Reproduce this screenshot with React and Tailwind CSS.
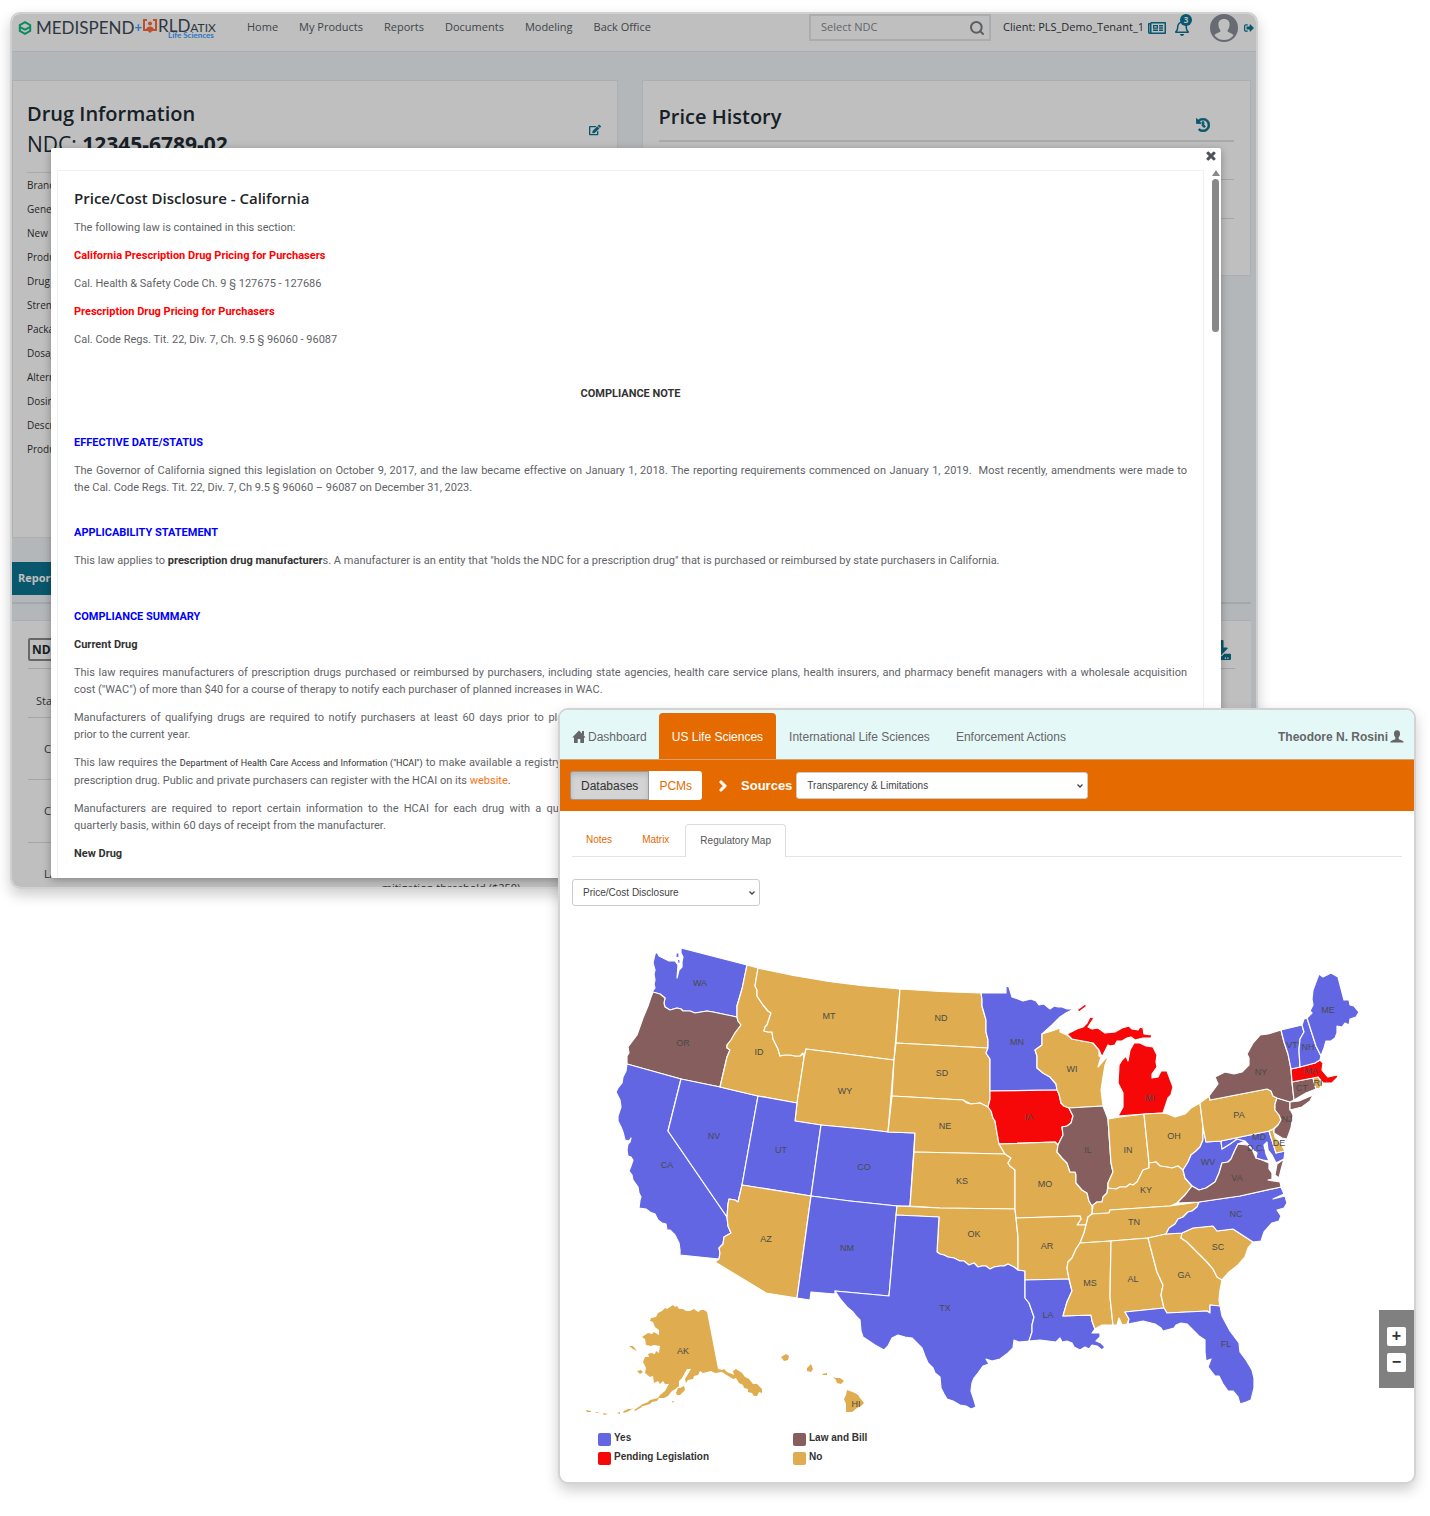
import { Search } from "lucide-react";
import {
  FaChevronRight,
  FaDownload,
  FaEdit,
  FaHistory,
  FaRegBell,
  FaRegNewspaper,
  FaSignOutAlt,
  FaTimes,
} from "react-icons/fa";

const NAV = ["Home", "My Products", "Reports", "Documents", "Modeling", "Back Office"];

const DRUG_FIELDS = [
  "Brand Name",
  "Generic Name",
  "New Drug",
  "Product Type",
  "Drug Class",
  "Strength",
  "Package Size",
  "Dosage Form",
  "Alternate ID",
  "Dosing Unit",
  "Description",
  "Product Status",
];

const COLORS = {
  yes: "#6266e3",
  pending: "#f70808",
  both: "#875e5e",
  no: "#dfad4f",
};

const LEGEND = [
  { label: "Yes", swatch: "bg-[#6266e3]" },
  { label: "Law and Bill", swatch: "bg-[#875e5e]" },
  { label: "Pending Legislation", swatch: "bg-[#f70808]" },
  { label: "No", swatch: "bg-[#dfad4f]" },
];

// [code, status, label x, label y, outline]
const STATES = [
  ["WA", "yes", 700, 983, "M681 948L747 965L742 989L737 1006L737 1017L713 1012L707 1011L695 1013L690 1011L683 1011L681 1009L677 1008L670 1010L665 1007L664 1003L665 998L660 994L652 992L655 988L654 984L655 980L654 974L655 970L653 963L655 954L657 952L659 956L663 958L669 961L675 961L678 965L677 978L679 970L682 967L682 962L683 957L681 953ZM676 953l3 0l0 4l-3 1ZM677 959l3 1l0 4l-2 -1Z"],
  ["OR", "both", 683, 1043, "M653 992L660 994L665 998L664 1003L665 1007L670 1010L677 1008L681 1009L683 1011L690 1011L695 1013L707 1011L713 1012L737 1017L738 1021L741 1025L735 1033L731 1040L727 1045L727 1048L730 1050L727 1057L720 1087L681 1079L627 1064L627 1056L629 1053L628 1047L637 1035L643 1018L648 1006L651 997Z"],
  ["CA", "yes", 667, 1165, "M627 1064L681 1079L668 1131L727 1217L728 1226L731 1233L724 1237L723 1244L719 1248L720 1253L719 1259L680 1255L680 1250L679 1243L675 1235L670 1230L667 1230L666 1224L662 1223L658 1220L655 1214L650 1212L646 1209L639 1208L640 1200L641 1197L639 1193L638 1187L633 1180L632 1175L629 1171L631 1166L633 1160L631 1157L628 1156L627 1150L628 1144L630 1142L631 1138L629 1141L625 1140L623 1132L621 1127L618 1121L618 1116L621 1107L620 1100L616 1092L618 1088L622 1083L623 1077L626 1071Z"],
  ["NV", "yes", 714, 1136, "M681 1079L720 1087L758 1096L742 1185L738 1202L735 1200L729 1199L728 1204L727 1217L668 1131Z"],
  ["ID", "no", 759, 1052, "M747 965L758 968L755 986L757 990L757 996L763 1005L768 1011L771 1013L769 1019L767 1025L765 1027L764 1031L768 1032L772 1032L773 1039L776 1045L778 1049L780 1056L784 1055L790 1055L795 1056L800 1056L803 1053L804 1058L797 1103L758 1096L720 1087L727 1057L730 1050L727 1048L727 1045L731 1040L735 1033L741 1025L738 1021L737 1017L737 1006L742 989Z"],
  ["MT", "no", 829, 1016, "M758 968Q826 984 900 989L894 1060L806 1049L804 1058L803 1053L800 1056L795 1056L790 1055L784 1055L780 1056L778 1049L776 1045L773 1039L772 1032L768 1032L764 1031L765 1027L767 1025L769 1019L771 1013L768 1011L763 1005L757 996L757 990L755 986Z"],
  ["WY", "no", 845, 1091, "M806 1049L894 1060L888 1132L863 1129L821 1125L795 1121L797 1103L804 1058Z"],
  ["UT", "yes", 781, 1150, "M758 1096L797 1103L795 1121L821 1125L811 1196L742 1185Z"],
  ["CO", "yes", 864, 1167, "M821 1125L863 1129L888 1132L915 1133L910 1206L897 1206L850 1201L811 1196Z"],
  ["AZ", "no", 766, 1239, "M742 1185L811 1196L797 1298L766 1293L715 1262L719 1259L720 1253L719 1248L723 1244L724 1237L731 1233L728 1226L727 1217L728 1204L729 1199L735 1200L738 1202Z"],
  ["NM", "yes", 847, 1248, "M811 1196L850 1201L897 1206L889 1296L835 1291L835 1294L811 1292L810 1300L797 1298Z"],
  ["ND", "no", 941, 1018, "M900 989Q940 992 981 993L982 999L982 1006L984 1013L986 1020L986 1032L988 1040L988 1048L896 1043Z"],
  ["SD", "no", 942, 1073, "M896 1043L988 1048L986 1053L990 1059L990 1091L990 1099L988 1107L980 1103L971 1104L963 1100L892 1096L894 1060Z"],
  ["NE", "no", 945, 1126, "M892 1096L963 1100L967 1103L971 1104L980 1103L988 1107L991 1111L993 1118L995 1121L997 1133L999 1144L1005 1154L914 1152L915 1133L888 1132Z"],
  ["KS", "no", 962, 1181, "M914 1152L1005 1154L1011 1158L1008 1163L1010 1166L1015 1170L1015 1209L940 1208L910 1206Z"],
  ["OK", "no", 974, 1234, "M897 1206L940 1208L1015 1209L1016 1218L1018 1237L1018 1270L1014 1267L1008 1264L1004 1266L1000 1266L994 1267L990 1269L986 1266L982 1266L978 1267L974 1263L969 1265L964 1261L960 1261L954 1258L948 1257L944 1255L940 1254L937 1252L939 1217L896 1215Z"],
  ["TX", "yes", 945, 1308, "M896 1215L939 1217L937 1252L940 1254L944 1255L948 1257L954 1258L960 1261L964 1261L969 1265L974 1263L978 1267L982 1266L986 1266L990 1269L994 1267L1000 1266L1004 1266L1008 1264L1014 1267L1018 1270L1025 1271L1025 1298L1029 1303L1034 1317L1032 1325L1032 1332L1029 1341L1019 1342L1014 1340L1013 1348L1008 1353L1000 1359L992 1361L986 1359L989 1364L983 1366L978 1373L974 1378L972 1383L971 1391L974 1400L976 1407L971 1409L966 1406L960 1405L953 1401L947 1399L944 1394L941 1388L940 1377L935 1373L933 1368L928 1363L925 1356L922 1348L917 1343L912 1338L905 1337L898 1335L892 1338L888 1346L884 1350L875 1345L869 1341L863 1337L861 1331L860 1320L857 1317L853 1312L847 1307L841 1300L835 1291L889 1296Z"],
  ["MN", "yes", 1017, 1042, "M981 993L1006 993L1006 986L1009 987L1012 997L1018 999L1023 1001L1027 1000L1031 999L1036 1001L1039 1005L1044 1004L1050 1009L1054 1006L1058 1007L1062 1007L1067 1009L1074 1009L1066 1013L1060 1017L1052 1025L1042 1034L1042 1045L1035 1050L1037 1056L1037 1068L1043 1073L1050 1077L1056 1084L1057 1090L990 1091L990 1059L986 1053L988 1048L988 1040L986 1032L986 1020L984 1013L982 1006L982 999Z"],
  ["IA", "pending", 1029, 1117, "M990 1091L1057 1090L1059 1094L1061 1103L1064 1106L1069 1108L1073 1116L1071 1123L1067 1126L1062 1127L1063 1135L1058 1145L1055 1142L999 1144L997 1133L995 1121L993 1118L991 1111L988 1107L990 1099Z"],
  ["MO", "no", 1045, 1184, "M999 1144L1055 1142L1058 1145L1057 1152L1062 1158L1067 1163L1070 1172L1075 1172L1076 1175L1076 1183L1082 1190L1087 1193L1089 1201L1092 1206L1092 1214L1088 1217L1086 1225L1077 1225L1081 1219L1080 1216L1016 1218L1015 1209L1015 1170L1010 1166L1008 1163L1011 1158L1005 1154Z"],
  ["AR", "no", 1047, 1246, "M1016 1218L1080 1216L1081 1219L1077 1225L1086 1225L1084 1233L1080 1243L1076 1249L1072 1258L1068 1262L1067 1268L1069 1279L1025 1280L1025 1271L1018 1270L1018 1237Z"],
  ["LA", "yes", 1048, 1315, "M1025 1280L1069 1279L1072 1291L1067 1302L1063 1316L1091 1315L1092 1321L1095 1329L1092 1333L1100 1333L1100 1337L1096 1341L1101 1343L1105 1347L1102 1350L1097 1346L1092 1345L1089 1349L1085 1347L1080 1350L1074 1347L1072 1343L1067 1341L1062 1342L1060 1338L1056 1342L1048 1341L1040 1340L1029 1341L1032 1332L1032 1325L1034 1317L1029 1303L1025 1298Z"],
  ["WI", "no", 1072, 1069, "M1042 1034L1052 1031L1060 1028L1060 1032L1067 1035L1072 1039L1093 1043L1099 1050L1099 1056L1101 1057L1098 1067L1104 1060L1109 1055L1105 1065L1103 1077L1101 1090L1103 1106L1069 1108L1064 1106L1061 1103L1059 1094L1057 1090L1056 1084L1050 1077L1043 1073L1037 1068L1037 1056L1035 1050L1042 1045Z"],
  ["IL", "both", 1088, 1150, "M1069 1108L1103 1106L1108 1119L1111 1163L1113 1172L1108 1183L1107 1193L1103 1197L1102 1202L1097 1202L1092 1206L1089 1201L1087 1193L1082 1190L1076 1183L1076 1175L1075 1172L1070 1172L1067 1163L1062 1158L1057 1152L1058 1145L1063 1135L1062 1127L1067 1126L1071 1123L1073 1116Z"],
  ["IN", "no", 1128, 1150, "M1108 1119L1120 1117L1144 1114L1149 1163L1149 1168L1143 1170L1140 1176L1137 1182L1133 1185L1130 1184L1126 1187L1120 1187L1116 1189L1108 1188L1108 1183L1113 1172L1111 1163Z"],
  ["MI", "pending", 1150, 1098, "M1118 1116L1123 1107L1123 1093L1118 1083L1119 1065L1122 1060L1126 1056L1128 1061L1130 1050L1134 1043L1140 1043L1146 1046L1153 1047L1157 1055L1156 1062L1157 1067L1152 1074L1152 1078L1158 1077L1161 1071L1167 1071L1170 1079L1173 1087L1171 1095L1168 1098L1163 1113L1144 1114ZM1067 1034L1077 1029L1083 1027L1087 1023L1090 1017L1094 1018L1088 1027L1092 1029L1098 1028L1105 1033L1115 1032L1122 1028L1129 1026L1132 1029L1138 1030L1140 1027L1143 1028L1144 1034L1152 1035L1151 1038L1143 1038L1135 1040L1131 1037L1127 1038L1122 1041L1117 1041L1115 1045L1110 1046L1108 1045L1102 1057L1099 1050L1093 1043L1072 1039ZM1077 1010l8 -6l2 2l-8 6Z"],
  ["OH", "no", 1174, 1136, "M1144 1114L1163 1113L1168 1114L1175 1117L1185 1114L1191 1108L1200 1103L1203 1127L1203 1140L1200 1147L1196 1151L1191 1155L1188 1162L1183 1170L1178 1166L1172 1168L1167 1167L1160 1166L1156 1162L1149 1163Z"],
  ["KY", "no", 1146, 1190, "M1092 1214L1093 1205L1097 1202L1102 1202L1103 1197L1107 1193L1108 1188L1116 1189L1120 1187L1126 1187L1130 1184L1133 1185L1137 1182L1140 1176L1143 1170L1149 1168L1149 1163L1156 1162L1160 1166L1167 1167L1172 1168L1178 1166L1183 1170L1185 1178L1192 1186L1185 1195L1177 1203L1170 1206L1110 1210L1109 1213Z"],
  ["TN", "no", 1134, 1222, "M1092 1214L1109 1213L1110 1210L1170 1206L1199 1202L1197 1207L1192 1211L1188 1212L1183 1217L1178 1219L1175 1224L1169 1228L1166 1234L1148 1238L1111 1241L1080 1243L1084 1233L1086 1225L1088 1217Z"],
  ["MS", "no", 1090, 1283, "M1080 1243L1111 1241L1110 1297L1113 1325L1102 1325L1095 1329L1092 1321L1091 1315L1063 1316L1067 1302L1072 1291L1069 1279L1067 1268L1068 1262L1072 1258L1076 1249Z"],
  ["AL", "no", 1133, 1279, "M1111 1241L1148 1238L1157 1272L1163 1285L1161 1295L1164 1308L1125 1312L1129 1319L1127 1324L1122 1325L1119 1318L1117 1325L1113 1325L1110 1297Z"],
  ["GA", "no", 1184, 1275, "M1148 1238L1166 1234L1182 1233L1181 1238L1187 1242L1193 1248L1200 1255L1207 1262L1213 1269L1217 1277L1222 1280L1220 1290L1219 1300L1220 1306L1210 1305L1210 1313L1207 1311L1167 1313L1164 1308L1161 1295L1163 1285L1157 1272Z"],
  ["FL", "yes", 1226, 1344, "M1125 1312L1164 1308L1167 1313L1207 1311L1210 1313L1210 1305L1220 1306L1222 1316L1230 1331L1239 1343L1240 1352L1246 1360L1252 1370L1254 1378L1254 1388L1251 1400L1246 1402L1240 1404L1238 1397L1233 1391L1228 1391L1223 1384L1219 1376L1215 1376L1208 1367L1211 1359L1206 1361L1205 1352L1205 1340L1199 1336L1193 1330L1187 1324L1181 1323L1176 1325L1174 1328L1163 1331L1161 1328L1155 1324L1143 1321L1128 1324L1129 1319Z"],
  ["SC", "no", 1218, 1247, "M1182 1233L1193 1228L1213 1226L1217 1231L1233 1229L1253 1242L1248 1248L1245 1257L1238 1265L1229 1272L1222 1280L1217 1277L1213 1269L1207 1262L1200 1255L1193 1248L1187 1242L1181 1238Z"],
  ["NC", "yes", 1236, 1214, "M1199 1202L1240 1196L1281 1187L1284 1194L1273 1199L1285 1196L1287 1203L1284 1208L1277 1210L1281 1216L1279 1221L1272 1223L1264 1232L1261 1241L1253 1242L1233 1229L1217 1231L1213 1226L1193 1228L1182 1233L1166 1234L1169 1228L1175 1224L1178 1219L1183 1217L1188 1212L1192 1211L1197 1207Z"],
  ["WV", "yes", 1208, 1162, "M1203 1127L1206 1142L1221 1141L1222 1149L1230 1144L1237 1139L1245 1141L1238 1144L1235 1150L1231 1159L1228 1162L1222 1163L1219 1173L1215 1182L1206 1188L1199 1190L1192 1186L1185 1178L1183 1170L1188 1162L1191 1155L1196 1151L1200 1147L1203 1140Z"],
  ["VA", "both", 1237, 1178, "M1177 1203L1185 1195L1192 1186L1199 1190L1206 1188L1215 1182L1219 1173L1222 1163L1228 1162L1231 1159L1235 1150L1238 1144L1247 1145L1252 1149L1256 1158L1262 1160L1269 1163L1269 1169L1272 1173L1272 1179L1268 1180L1280 1182L1281 1187L1240 1196L1199 1202ZM1277 1164L1284 1159L1281 1170L1279 1178L1275 1175Z"],
  ["MD", "yes", 1259, 1137, "M1221 1141L1269 1131L1276 1153L1285 1151L1284 1159L1276 1163L1272 1155L1268 1150L1267 1142L1264 1145L1266 1154L1269 1161L1263 1160L1256 1158L1257 1153L1252 1149L1245 1141L1237 1139L1230 1144L1222 1149Z"],
  ["D.C.", "no", 1256, 1148, ""],
  ["DE", "no", 1279, 1143, "M1269 1131L1273 1129L1275 1137L1281 1144L1285 1151L1276 1153Z"],
  ["PA", "no", 1239, 1115, "M1200 1103L1209 1096L1210 1100L1267 1089L1271 1091L1273 1096L1277 1098L1275 1104L1275 1110L1279 1115L1281 1120L1278 1125L1273 1129L1269 1131L1221 1141L1206 1142L1203 1127Z"],
  ["NJ", "both", 1287, 1119, "M1277 1098L1290 1102L1290 1109L1293 1115L1291 1128L1287 1139L1282 1138L1274 1133L1274 1129L1278 1125L1281 1120L1279 1115L1275 1110L1275 1104Z"],
  ["NY", "both", 1261, 1072, "M1209 1096L1218 1084L1215 1077L1225 1072L1234 1074L1242 1072L1249 1065L1249 1058L1247 1054L1253 1043L1260 1035L1268 1034L1281 1030L1284 1042L1288 1054L1291 1069L1292 1082L1294 1100L1290 1102L1277 1098L1273 1096L1271 1091L1267 1089L1210 1100ZM1290 1102L1299 1101L1313 1095L1310 1101L1302 1107L1290 1110Z"],
  ["CT", "both", 1302, 1088, "M1292 1082L1313 1078L1316 1089L1306 1093L1294 1100Z"],
  ["RI", "no", 1318, 1083, "M1313 1078L1318 1077L1323 1083L1320 1088L1316 1089Z"],
  ["MA", "pending", 1311, 1071, "M1291 1069L1300 1067L1315 1063L1320 1060L1323 1063L1322 1070L1328 1077L1337 1075L1338 1077L1332 1083L1325 1083L1323 1083L1318 1077L1313 1078L1292 1082Z"],
  ["VT", "yes", 1292, 1045, "M1281 1030L1302 1025L1304 1032L1300 1039L1299 1050L1300 1067L1291 1069L1288 1054L1284 1042Z"],
  ["NH", "yes", 1308, 1047, "M1302 1025L1304 1019L1307 1018L1316 1046L1321 1056L1320 1060L1315 1063L1300 1067L1299 1050L1300 1039L1304 1032Z"],
  ["ME", "yes", 1328, 1010, "M1307 1018L1312 1013L1310 1011L1313 1005L1312 999L1313 990L1319 974L1323 977L1331 973L1338 977L1344 1000L1349 1000L1350 1005L1354 1006L1359 1012L1356 1017L1350 1019L1349 1025L1345 1023L1342 1027L1337 1026L1337 1033L1335 1038L1331 1041L1326 1041L1324 1048L1321 1056L1316 1046Z"],
  ["AK", "no", 683, 1351, "M673 1305L675 1307L677 1306L679 1309L683 1309L686 1311L690 1311L694 1309L698 1312L701 1310L704 1310L707 1312L718 1369L722 1370L724 1369L727 1372L734 1375L733 1371L736 1369L742 1373L745 1377L749 1379L753 1384L757 1384L762 1389L762 1393L759 1392L757 1396L754 1396L752 1393L748 1392L748 1389L744 1388L743 1385L739 1383L736 1378L733 1379L722 1372L715 1373L711 1371L703 1373L700 1371L698 1375L694 1376L693 1379L688 1380L686 1383L685 1379L691 1369L687 1369L682 1378L679 1381L679 1386L674 1390L672 1391L668 1396L664 1398L659 1398L657 1401L652 1402L650 1404L640 1407L641 1405L648 1402L650 1400L658 1398L660 1395L665 1391L669 1384L665 1384L663 1381L660 1384L658 1381L654 1383L653 1376L650 1377L645 1373L646 1368L643 1362L645 1357L649 1357L648 1354L651 1353L655 1354L656 1351L659 1353L660 1346L654 1345L651 1346L646 1345L645 1339L642 1337L648 1333L652 1334L654 1332L659 1335L659 1330L655 1327L653 1322L650 1321L651 1318L656 1317L658 1313L662 1311L665 1308L667 1309ZM676 1393l2 -5l2 0l4 -2l1 4l-5 5l-3 0ZM629 1346l4 0l4 5l-4 -2ZM637 1371l4 -1l2 2l-3 2ZM672 1401l2 0l-1 2ZM634 1410l6 -4l2 1l-7 4ZM624 1411l4 -2l3 0l3 -1l-7 4l-4 1ZM617 1413l3 -1l0 2ZM603 1413l5 1l-4 1ZM594 1412l4 0l0 1ZM586 1410l5 1l0 1l-4 0Z"],
  ["HI", "no", 856, 1404, "M781 1357l5 -3l3 2l-1 4l-4 1ZM807 1368l4 -4l2 5l-2 3l-4 -1ZM822 1374l5 -1l0 2l-4 0ZM833 1377l3 1l4 0l4 3l-3 3l-4 -1l-1 -3ZM847 1390L855 1393L858 1395L860 1398L864 1403L861 1406L857 1408L852 1412L846 1412L846 1404L844 1399L846 1395Z"],
];

function HomeGlyph() {
  return (
    <svg viewBox="0 0 14 14" className="size-3.5" fill="currentColor" aria-hidden="true">
      <path d="M7 0.5L13.8 7.5H12V13H8.3V9H5.7V13H2V7.5H0.2Z" />
      <path d="M10 1H12V5H10Z" />
    </svg>
  );
}

function UserGlyph() {
  return (
    <svg viewBox="0 0 13 13" className="size-3.5" fill="currentColor" aria-hidden="true">
      <path d="M6.5 0.3C8.6 0.3 9.4 1.8 9.3 3.6C9.2 5.2 8.6 6 8.1 6.6V8.6C9.6 9.4 12.7 9.6 12.7 11.6H0.3C0.3 9.6 3.4 9.4 4.9 8.6V6.6C4.4 6 3.8 5.2 3.7 3.6C3.6 1.8 4.4 0.3 6.5 0.3Z" />
    </svg>
  );
}

function Logo() {
  return (
    <div className="flex w-[229px] shrink-0 items-center font-[Lato,sans-serif] text-[#3d4a57]">
      <svg viewBox="0 0 14 14" className="size-3.5" fill="none" stroke="#10b981" strokeWidth="2" aria-hidden="true">
        <path d="M7 1.2L12.2 4V10L7 12.8L1.8 10V4Z" />
        <path d="M2 6.2L7 8.6L12 6.2" />
      </svg>
      <span className="ml-1 text-[17px]">MEDISPEND</span>
      <span className="text-[13px] font-bold text-[#3b9cff]">+</span>
      <svg viewBox="0 0 16 16" className="mb-1 size-4" fill="none" stroke="#ff6a3d" strokeWidth="2" aria-hidden="true">
        <path d="M5 2H2V12H6M11 2H14V12H10" />
        <circle cx="8" cy="5.5" r="2" fill="#ff6a3d" stroke="none" />
        <path d="M4 11.5C5 7.5 11 7.5 12 11.5L8 15Z" fill="#ff6a3d" stroke="none" />
      </svg>
      <span className="relative mb-1 text-[17px]">
        RLD<span className="text-xs">ATIX</span>
        <span className="absolute top-[18px] left-2.5 text-[8px] leading-none font-bold whitespace-nowrap text-[#3b9cff]">
          Life Sciences
        </span>
      </span>
    </div>
  );
}

function TopBar() {
  return (
    <header className="flex h-[38px] items-center border-b border-[#e3e9e9] bg-white pr-0.5 pb-2.5 pl-1.5 text-[11px] text-[#555c63]">
      <Logo />
      <nav className="flex gap-[21px]">
        {NAV.map((item) => (
          <a key={item} href="#" className="whitespace-nowrap">
            {item}
          </a>
        ))}
      </nav>
      <label className="ml-auto flex h-[27px] w-[182px] items-center border-2 border-[#e4e6e8] px-2.5">
        <input
          type="text"
          placeholder="Select NDC"
          aria-label="Select NDC"
          className="w-full min-w-0 bg-transparent outline-none placeholder:text-[#85898d]"
        />
        <Search className="-mr-1.5 size-4 shrink-0 text-[#7b7f83]" strokeWidth={3} />
      </label>
      <span className="ml-3 whitespace-nowrap text-[#33383d]">Client: PLS_Demo_Tenant_1</span>
      <button type="button" aria-label="News" className="ml-1 text-[#0c7491]">
        <FaRegNewspaper className="size-[18px]" />
      </button>
      <button type="button" aria-label="Notifications" className="relative ml-2 text-[#0c7491]">
        <FaRegBell className="size-4" />
        <span className="absolute -top-1.5 left-1.5 flex size-3 items-center justify-center rounded-full bg-[#0c7491] text-[8px] font-bold text-white">
          3
        </span>
      </button>
      <svg viewBox="0 0 28 28" className="ml-5 size-7" aria-hidden="true">
        <circle cx="14" cy="14" r="13" fill="#fff" stroke="#8b8f99" strokeWidth="2" />
        <path
          d="M14 1A13 13 0 0 0 4 22C5 19 10.5 18.5 10.5 17C10.5 16 9 15 8.5 11.5C8 8 9.5 5 14 5C18.5 5 20 8 19.5 11.5C19 15 17.5 16 17.5 17C17.5 18.5 23 19 24 22A13 13 0 0 0 14 1Z"
          fill="#8b8f99"
        />
      </svg>
      <button type="button" aria-label="Sign out" className="ml-1.5 text-[#0c7491]">
        <FaSignOutAlt className="size-2.5" />
      </button>
    </header>
  );
}

function DrugPage() {
  return (
    <div className="h-full bg-[#f1f4f8]">
      <TopBar />
      <div className="flex items-start gap-6 pt-7 pr-[5px]">
        <section className="h-[458px] min-w-0 flex-1 border border-[#e6eaed] bg-white px-3.5 pt-[19px]">
          <div className="flex items-center border-b border-[#e2e2e2] pb-3">
            <div className="text-[#212b33]">
              <h2 className="text-xl leading-[28px] font-semibold">Drug Information</h2>
              <p className="text-[21px] leading-[32px]">
                NDC: <b>12345-6789-02</b>
              </p>
            </div>
            <button type="button" aria-label="Edit drug" className="mr-0.5 ml-auto text-[#0c7491]">
              <FaEdit className="size-3" />
            </button>
          </div>
          <ul className="text-[10px] leading-[24px] text-[#333]">
            {DRUG_FIELDS.map((field) => (
              <li key={field}>{field}</li>
            ))}
          </ul>
        </section>
        <section className="h-[196px] min-w-0 flex-1 border border-[#e6eaed] bg-white px-4 pt-[21px]">
          <div className="flex border-b-2 border-[#e2e2e2] pb-2">
            <h2 className="text-xl leading-[30px] font-semibold text-[#212b33]">Price History</h2>
            <button type="button" aria-label="History" className="mt-4 mr-6 ml-auto text-[#0c7491]">
              <FaHistory className="size-3.5" strokeWidth={30} />
            </button>
          </div>
          <div className="h-[38px] border-b border-[#dcdcdc]" />
          <div className="h-[39px] border-b border-[#dcdcdc]" />
        </section>
      </div>
      <div className="mr-[5px] border-b-2 border-[#dcdfe3] pt-6 pb-[7px]">
        <button type="button" className="h-[33px] bg-[#0c7491] px-1.5 text-[11px] font-bold text-white">
          Reporting
        </button>
      </div>
      <section className="mt-4 mr-[5px] h-[270px] border-t border-[#e6eaed] bg-white px-4 pt-[17px] text-[11px] text-[#444]">
        <div className="flex items-center border-b border-[#dcdcdc] pb-[7px]">
          <button type="button" className="h-[23px] rounded-xs border-2 border-[#8a8a8a] px-0.5 text-xs font-bold text-[#212b33]">
            NDC
          </button>
          <button type="button" aria-label="Download" className="mr-1 ml-auto text-[#0c7491]">
            <FaDownload className="size-5" />
          </button>
        </div>
        <div className="border-b border-[#dcdcdc] px-2 pt-[23px] pb-2 leading-[17px]">State</div>
        <div className="h-[62px] border-b border-[#dcdcdc] px-4 pt-[22px] leading-[17px]">CA</div>
        <div className="h-[63px] border-b border-[#dcdcdc] px-4 pt-[22px] leading-[17px]">CO</div>
        <div className="flex px-4 pt-[22px] leading-[17px]">
          <span>LA</span>
          <span className="mt-3.5 ml-[325px]">mitigation threshold ($250)</span>
        </div>
      </section>
    </div>
  );
}

function Heading({ className, children }) {
  return <h3 className={`font-bold text-[#00f] ${className}`}>{children}</h3>;
}

function FullLine({ children }) {
  return <span className="block [text-align-last:justify]">{children}</span>;
}

function DisclosureDialog() {
  return (
    <div
      role="dialog"
      aria-label="Price/Cost Disclosure - California"
      className="absolute top-[134px] right-[35px] bottom-[9px] left-[39px] flex overflow-hidden rounded-xs bg-white pt-[22px] pl-1.5 shadow-[0_2px_8px_rgba(0,0,0,0.3)]"
    >
      <button type="button" aria-label="Close" className="absolute top-0.5 right-1 text-[#4a4f55]">
        <FaTimes className="size-3" strokeWidth={40} />
      </button>
      <article className="min-w-0 flex-1 border border-b-0 border-[#eef0f2] px-4 pt-4 font-[Roboto,sans-serif] text-[11px] leading-[17px] text-[#5f6368]">
        <h2 className="mb-2.5 font-['Open_Sans',sans-serif] text-[15px] leading-[22px] font-semibold text-[#212529]">
          Price/Cost Disclosure - California
        </h2>
        <div className="flex flex-col gap-[11px] text-justify">
          <p>The following law is contained in this section:</p>
          <p className="font-bold text-[#f00]">California Prescription Drug Pricing for Purchasers</p>
          <p>Cal. Health &amp; Safety Code Ch. 9 § 127675 - 127686</p>
          <p className="font-bold text-[#f00]">Prescription Drug Pricing for Purchasers</p>
          <p>Cal. Code Regs. Tit. 22, Div. 7, Ch. 9.5 § 96060 - 96087</p>
          <h3 className="mt-[26px] text-center font-bold text-[#333]">COMPLIANCE NOTE</h3>
          <Heading className="mt-[21px]">EFFECTIVE DATE/STATUS</Heading>
          <p>
            <FullLine>
              The Governor of California signed this legislation on October 9, 2017, and the law became effective on
              January 1, 2018. The reporting requirements commenced on January 1, 2019.&nbsp; Most recently, amendments
              were made to
            </FullLine>
            the Cal. Code Regs. Tit. 22, Div. 7, Ch 9.5 § 96060 – 96087 on December 31, 2023.
          </p>
          <Heading className="mt-[17px]">APPLICABILITY STATEMENT</Heading>
          <p>
            This law applies to <b className="text-[#333]">prescription drug manufacturer</b>s. A manufacturer is an
            entity that "holds the NDC for a prescription drug" that is purchased or reimbursed by state purchasers in
            California.
          </p>
          <Heading className="mt-7">COMPLIANCE SUMMARY</Heading>
          <h4 className="font-bold text-[#333]">Current Drug</h4>
          <p>
            <FullLine>
              This law requires manufacturers of prescription drugs purchased or reimbursed by purchasers, including
              state agencies, health care service plans, health insurers, and pharmacy benefit managers with a
              wholesale acquisition
            </FullLine>
            cost ("WAC") of more than $40 for a course of therapy to notify each purchaser of planned increases in WAC.
          </p>
          <p>
            <FullLine>
              Manufacturers of qualifying drugs are required to notify purchasers at least 60 days prior to planned
              increases in WAC of more than 16%, including the proposed increase and any increases over the two calendar
              years
            </FullLine>
            prior to the current year.
          </p>
          <p>
            <FullLine>
              This law requires the{" "}
              <span className="text-[9px] text-[#333]">Department of Health Care Access and Information ("HCAI")</span>{" "}
              to make available a registry of state and private health care purchasers who wish to be notified in
              writing of an increase in the wholesale cost of a covered
            </FullLine>
            prescription drug. Public and private purchasers can register with the HCAI on its{" "}
            <a href="#" className="text-[#f97316]">website</a>.
          </p>
          <p>
            <FullLine>
              Manufacturers are required to report certain information to the HCAI for each drug with a qualifying
              increase in cost. The information must be reported and is then published by the department on its website
              on a
            </FullLine>
            quarterly basis, within 60 days of receipt from the manufacturer.
          </p>
          <h4 className="font-bold text-[#333]">New Drug</h4>
        </div>
      </article>
      {/* scrollbar */}
      <div className="flex w-[17px] flex-col items-center pl-1.5">
        <div className="border-x-4 border-b-[6px] border-x-transparent border-b-[#888]" />
        <div className="mt-[3px] h-[153px] w-[7px] rounded-full bg-[#888]" />
      </div>
    </div>
  );
}

function RegulatoryMap() {
  return (
    <svg viewBox="560 906 854 514" className="block h-auto w-full" role="img" aria-label="Regulatory map by state">
      {STATES.map(([code, status, , , outline]) => (
        <path
          key={code}
          d={outline}
          fill={COLORS[status]}
          stroke="#fff"
          strokeWidth={code === "AK" || code === "HI" ? 0 : 1.2}
          strokeLinejoin="round"
        />
      ))}
      <g fill="#4a4a4a" fontSize="9" textAnchor="middle" fontFamily="'Liberation Sans', Arial, sans-serif">
        {STATES.map(([code, , x, y]) => (
          <text key={code} x={x} y={y + 3}>
            {code}
          </text>
        ))}
      </g>
    </svg>
  );
}

function SelectBox({ label, value, className }) {
  return (
    <div className={`relative ${className}`}>
      <select
        aria-label={label}
        className="h-[27px] w-full appearance-none rounded-[3px] border border-[#ccc] bg-white pl-2.5 text-[10px] text-[#444]"
      >
        <option>{value}</option>
      </select>
      <svg
        viewBox="0 0 8 8"
        className="pointer-events-none absolute top-2.5 right-1 size-2"
        fill="none"
        stroke="#444"
        strokeWidth="1.3"
        aria-hidden="true"
      >
        <path d="M1.5 2.5L4 5L6.5 2.5" />
      </svg>
    </div>
  );
}

function MapWindow() {
  return (
    <div className="relative mr-[14px] -mt-[181px] ml-[558px] overflow-hidden rounded-[10px] border-2 border-[#d3d3d3] bg-white font-['Liberation_Sans',Arial,sans-serif] shadow-[0_6px_14px_rgba(0,0,0,0.2)]">
      <header className="flex h-[49px] items-end bg-[#e5f8f8] pl-3 text-xs leading-[44px] text-[#666]">
        <nav className="flex items-end whitespace-nowrap">
          <a href="#" className="flex items-center gap-0.5 pr-3">
            <HomeGlyph />
            Dashboard
          </a>
          <a href="#" className="h-[46px] rounded-t bg-[#e56a00] px-[13px] pt-0.5 text-white">
            US Life Sciences
          </a>
          <a href="#" className="px-[13px]">
            International Life Sciences
          </a>
          <a href="#" className="px-[13px]">
            Enforcement Actions
          </a>
        </nav>
        <span className="mr-2.5 ml-auto flex items-center gap-0.5 font-bold whitespace-nowrap">
          Theodore N. Rosini <UserGlyph />
        </span>
      </header>
      <div className="flex h-[52px] items-center border-t border-[#d8a070] bg-[#e56a00] pl-2.5">
        <div className="flex text-xs">
          <button
            type="button"
            className="h-[29px] rounded-l-[3px] border border-[#999] bg-[#d4d4d4] px-2.5 text-[#333] shadow-[inset_0_3px_5px_rgba(0,0,0,0.125)]"
          >
            Databases
          </button>
          <button type="button" className="h-[29px] rounded-r-[3px] bg-white px-2.5 text-[#e56a00]">
            PCMs
          </button>
        </div>
        <FaChevronRight className="ml-[15px] size-3 text-white" strokeWidth={50} />
        <span className="ml-3 text-[13px] font-bold text-white">Sources</span>
        <SelectBox label="Sources" value="Transparency & Limitations" className="ml-1 w-[292px]" />
      </div>
      <div className="mx-3 mt-[13px] flex items-end border-b border-[#e4e4e4] text-[10px] leading-[32px]">
        <button type="button" className="px-3.5 text-[#e56a00]">
          Notes
        </button>
        <button type="button" className="px-4 text-[#e56a00]">
          Matrix
        </button>
        <button type="button" className="-mb-px rounded-t border border-b-0 border-[#ddd] bg-white px-3.5 text-[#555]">
          Regulatory Map
        </button>
      </div>
      <SelectBox label="Category" value="Price/Cost Disclosure" className="mx-3 mt-[22px] w-[188px]" />
      <div className="relative">
        <RegulatoryMap />
        <div className="absolute right-0 bottom-8 flex h-[78px] w-[35px] flex-col items-center justify-center gap-[7px] bg-[#808080]">
          <button type="button" aria-label="Zoom in" className="size-[19px] rounded-xs bg-white text-base leading-none font-bold text-[#333]">
            +
          </button>
          <button type="button" aria-label="Zoom out" className="size-[19px] rounded-xs bg-white text-base leading-none font-bold text-[#333]">
            −
          </button>
        </div>
      </div>
      <ul className="grid grid-cols-[195px_195px] pt-2 pb-4 pl-[38px] text-[10px] leading-[19px] font-bold text-[#333]">
        {LEGEND.map(({ label, swatch }) => (
          <li key={label} className="flex items-center gap-[3px]">
            <span className={`mt-1 size-[13px] rounded-xs ${swatch}`} />
            {label}
          </li>
        ))}
      </ul>
    </div>
  );
}

export default function App() {
  return (
    <main className="min-h-screen bg-white pt-3 pb-8">
      <div className="relative mr-[172px] ml-2.5 h-[877px] overflow-hidden rounded-[10px] border-2 border-[#d0d0d0] font-['Open_Sans','Noto_Sans',sans-serif] shadow-[0_6px_14px_rgba(0,0,0,0.2)]">
        <DrugPage />
        <div className="absolute inset-0 bg-black/25" />
        <DisclosureDialog />
      </div>
      <MapWindow />
    </main>
  );
}
